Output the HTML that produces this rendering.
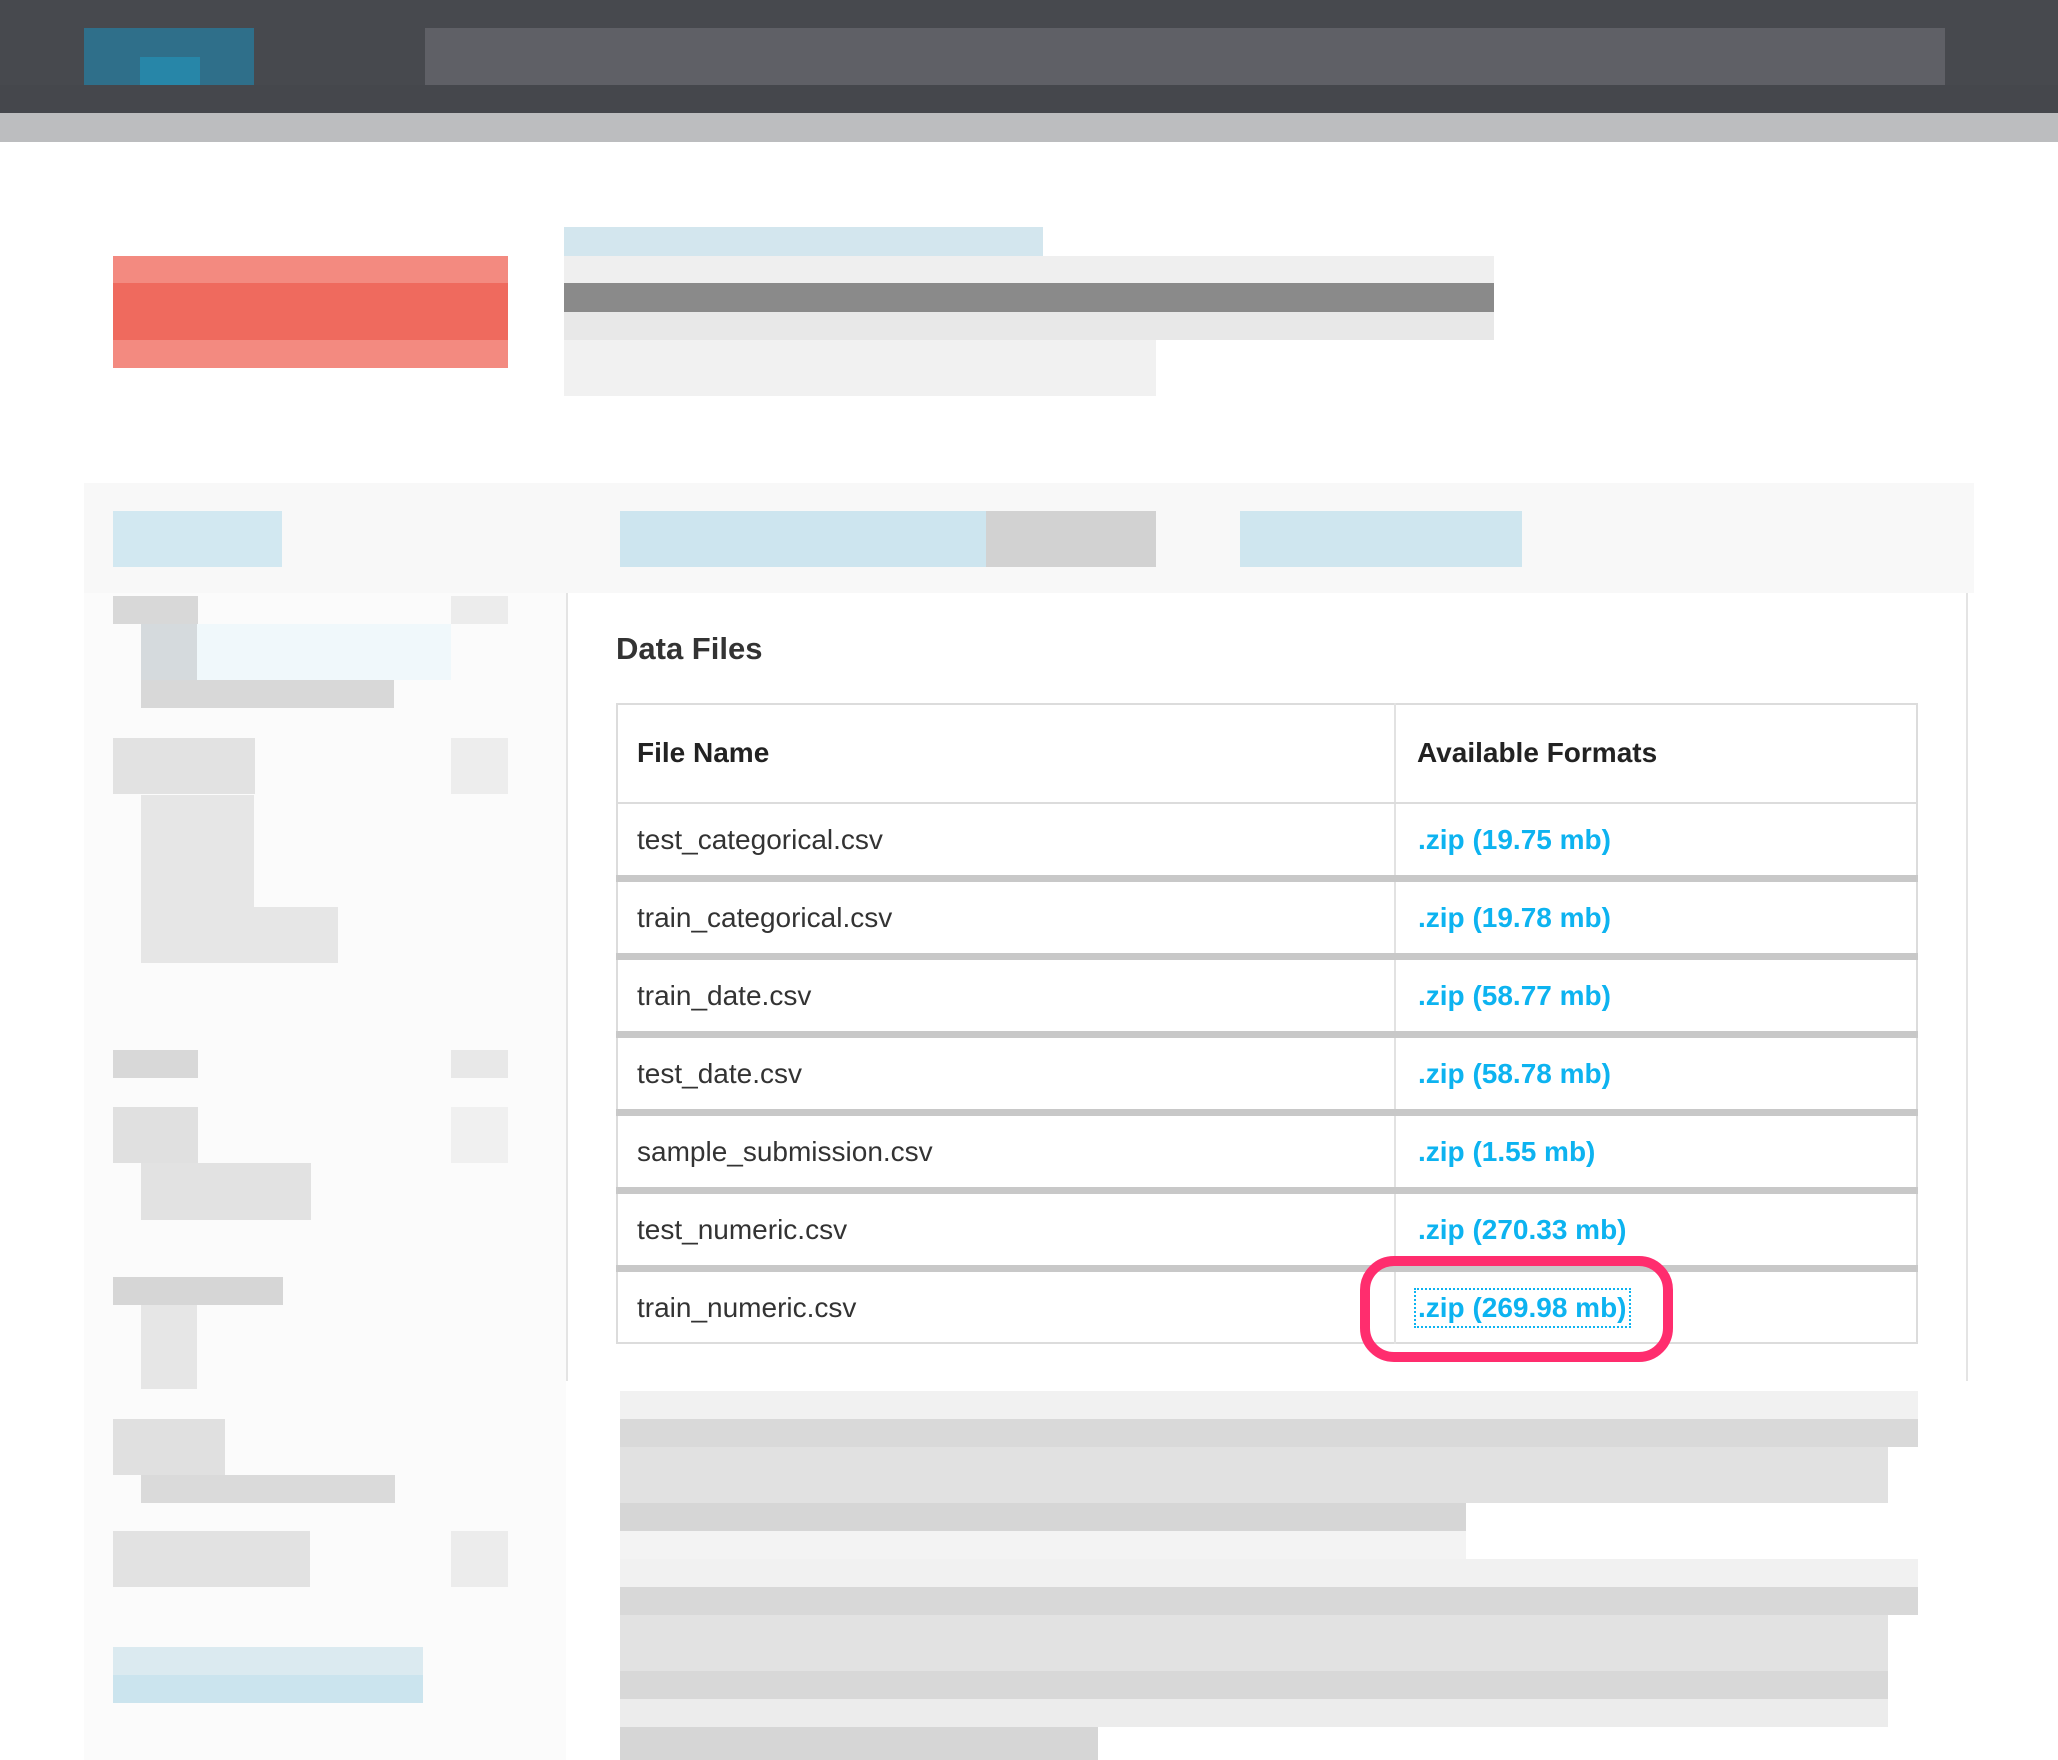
<!DOCTYPE html>
<html><head><meta charset="utf-8"><style>
*{margin:0;padding:0;box-sizing:border-box}
body{width:2058px;height:1760px;position:relative;background:#fff;font-family:"Liberation Sans",sans-serif;overflow:hidden}
.b{position:absolute}
.t{position:absolute;left:616px;width:1302px;border:2px solid #dcdcdc;border-top:none}
.cell{position:absolute;font-size:28px;color:#333}
.fmt{position:absolute;left:1418px;font-size:28px;font-weight:bold;color:#0db3f0}
</style></head><body>
<!-- top bar -->
<div class="b" style="left:0;top:0;width:2058px;height:113px;background:#45474c"></div>
<div class="b" style="left:0;top:0;width:2058px;height:85px;background:#47494e"></div>
<div class="b" style="left:84px;top:28px;width:170px;height:57px;background:#2f6f8a"></div>
<div class="b" style="left:140px;top:57px;width:60px;height:28px;background:#2786a8"></div>
<div class="b" style="left:425px;top:28px;width:1520px;height:57px;background:#6a6b70;opacity:.7"></div>
<div class="b" style="left:0;top:113px;width:2058px;height:29px;background:#bcbdbf"></div>
<!-- logo and title -->
<div class="b" style="left:113px;top:256px;width:395px;height:112px;background:#f38a80"></div>
<div class="b" style="left:113px;top:283px;width:395px;height:57px;background:#ef6a5e"></div>
<div class="b" style="left:564px;top:227px;width:479px;height:29px;background:#d3e6ee"></div>
<div class="b" style="left:564px;top:256px;width:930px;height:27px;background:#efefef"></div>
<div class="b" style="left:564px;top:283px;width:930px;height:29px;background:#8a8a8a"></div>
<div class="b" style="left:564px;top:312px;width:930px;height:28px;background:#e8e8e8"></div>
<div class="b" style="left:564px;top:340px;width:592px;height:56px;background:#f1f1f1"></div>
<!-- nav row -->
<div class="b" style="left:84px;top:483px;width:1890px;height:110px;background:#f8f8f8"></div>
<div class="b" style="left:113px;top:511px;width:169px;height:56px;background:#d2e8f1"></div>
<div class="b" style="left:620px;top:511px;width:366px;height:56px;background:#cde5ef"></div>
<div class="b" style="left:986px;top:511px;width:170px;height:56px;background:#d2d2d2"></div>
<div class="b" style="left:1240px;top:511px;width:282px;height:56px;background:#cfe6ef"></div>
<!-- sidebar -->
<div class="b" style="left:84px;top:593px;width:482px;height:1167px;background:#fbfbfb"></div>
<div class="b" style="left:113px;top:596px;width:85px;height:28px;background:#d8d8d8"></div>
<div class="b" style="left:451px;top:596px;width:57px;height:28px;background:#ececec"></div>
<div class="b" style="left:141px;top:624px;width:56px;height:56px;background:#d5dadd"></div>
<div class="b" style="left:197px;top:624px;width:254px;height:56px;background:#f0f8fb"></div>
<div class="b" style="left:141px;top:680px;width:253px;height:28px;background:#d8d8d8"></div>
<div class="b" style="left:113px;top:738px;width:142px;height:56px;background:#e2e2e2"></div>
<div class="b" style="left:451px;top:738px;width:57px;height:56px;background:#ededed"></div>
<div class="b" style="left:141px;top:795px;width:113px;height:112px;background:#e6e6e6"></div>
<div class="b" style="left:141px;top:907px;width:197px;height:56px;background:#e6e6e6"></div>
<div class="b" style="left:113px;top:1050px;width:85px;height:28px;background:#d8d8d8"></div>
<div class="b" style="left:451px;top:1050px;width:57px;height:28px;background:#e8e8e8"></div>
<div class="b" style="left:113px;top:1107px;width:85px;height:56px;background:#e0e0e0"></div>
<div class="b" style="left:451px;top:1107px;width:57px;height:56px;background:#f0f0f0"></div>
<div class="b" style="left:141px;top:1163px;width:170px;height:57px;background:#e2e2e2"></div>
<div class="b" style="left:113px;top:1277px;width:170px;height:28px;background:#d6d6d6"></div>
<div class="b" style="left:141px;top:1305px;width:56px;height:84px;background:#e6e6e6"></div>
<div class="b" style="left:113px;top:1419px;width:112px;height:56px;background:#e0e0e0"></div>
<div class="b" style="left:141px;top:1475px;width:254px;height:28px;background:#dadada"></div>
<div class="b" style="left:113px;top:1531px;width:197px;height:56px;background:#e2e2e2"></div>
<div class="b" style="left:451px;top:1531px;width:57px;height:56px;background:#ececec"></div>
<div class="b" style="left:113px;top:1647px;width:310px;height:28px;background:#dbeaf0"></div>
<div class="b" style="left:113px;top:1675px;width:310px;height:28px;background:#cbe4ee"></div>
<!-- content panel -->
<div class="b" style="left:566px;top:593px;width:1402px;height:788px;background:#fff;border-left:2px solid #e4e4e4;border-right:2px solid #e4e4e4"></div>
<div class="b" style="left:616px;top:631px;font-size:31px;font-weight:bold;color:#333">Data Files</div>
<!-- table -->
<div class="b" style="left:616px;top:703px;width:1302px;height:641px;border:2px solid #dcdcdc;background:#fff"></div>
<div class="b" style="left:1394px;top:703px;width:2px;height:641px;background:#e2e2e2"></div>
<div class="b" style="left:616px;top:802px;width:1302px;height:2px;background:#dcdcdc"></div>
<div class="b" style="left:616px;top:875px;width:1302px;height:7px;background:#c8c8c8"></div>
<div class="b" style="left:616px;top:953px;width:1302px;height:7px;background:#c8c8c8"></div>
<div class="b" style="left:616px;top:1031px;width:1302px;height:7px;background:#c8c8c8"></div>
<div class="b" style="left:616px;top:1109px;width:1302px;height:7px;background:#c8c8c8"></div>
<div class="b" style="left:616px;top:1187px;width:1302px;height:7px;background:#c8c8c8"></div>
<div class="b" style="left:616px;top:1265px;width:1302px;height:7px;background:#c8c8c8"></div>
<div class="cell" style="left:637px;top:737px;font-weight:bold;color:#222">File Name</div>
<div class="cell" style="left:1417px;top:737px;font-weight:bold;color:#222">Available Formats</div>
<div class="cell" style="left:637px;top:824px">test_categorical.csv</div>
<div class="fmt" style="top:824px">.zip (19.75 mb)</div>
<div class="cell" style="left:637px;top:902px">train_categorical.csv</div>
<div class="fmt" style="top:902px">.zip (19.78 mb)</div>
<div class="cell" style="left:637px;top:980px">train_date.csv</div>
<div class="fmt" style="top:980px">.zip (58.77 mb)</div>
<div class="cell" style="left:637px;top:1058px">test_date.csv</div>
<div class="fmt" style="top:1058px">.zip (58.78 mb)</div>
<div class="cell" style="left:637px;top:1136px">sample_submission.csv</div>
<div class="fmt" style="top:1136px">.zip (1.55 mb)</div>
<div class="cell" style="left:637px;top:1214px">test_numeric.csv</div>
<div class="fmt" style="top:1214px">.zip (270.33 mb)</div>
<div class="cell" style="left:637px;top:1292px">train_numeric.csv</div>
<div class="fmt" style="top:1292px;outline:2px dotted #0db3f0;outline-offset:2px">.zip (269.98 mb)</div>
<div class="b" style="left:1360px;top:1256px;width:313px;height:106px;border:10px solid #ff2d6e;border-radius:34px"></div>
<!-- lower blurred content -->
<div class="b" style="left:620px;top:1391px;width:1298px;height:28px;background:#f1f1f1"></div>
<div class="b" style="left:620px;top:1419px;width:1298px;height:28px;background:#d9d9d9"></div>
<div class="b" style="left:620px;top:1447px;width:1268px;height:56px;background:#e1e1e1"></div>
<div class="b" style="left:620px;top:1503px;width:846px;height:28px;background:#d6d6d6"></div>
<div class="b" style="left:620px;top:1531px;width:846px;height:28px;background:#f3f3f3"></div>
<div class="b" style="left:620px;top:1559px;width:1298px;height:28px;background:#f1f1f1"></div>
<div class="b" style="left:620px;top:1587px;width:1298px;height:28px;background:#d8d8d8"></div>
<div class="b" style="left:620px;top:1615px;width:1268px;height:56px;background:#e2e2e2"></div>
<div class="b" style="left:620px;top:1671px;width:1268px;height:28px;background:#d8d8d8"></div>
<div class="b" style="left:620px;top:1699px;width:1268px;height:28px;background:#ececec"></div>
<div class="b" style="left:620px;top:1727px;width:478px;height:33px;background:#d6d6d6"></div>
</body></html>
